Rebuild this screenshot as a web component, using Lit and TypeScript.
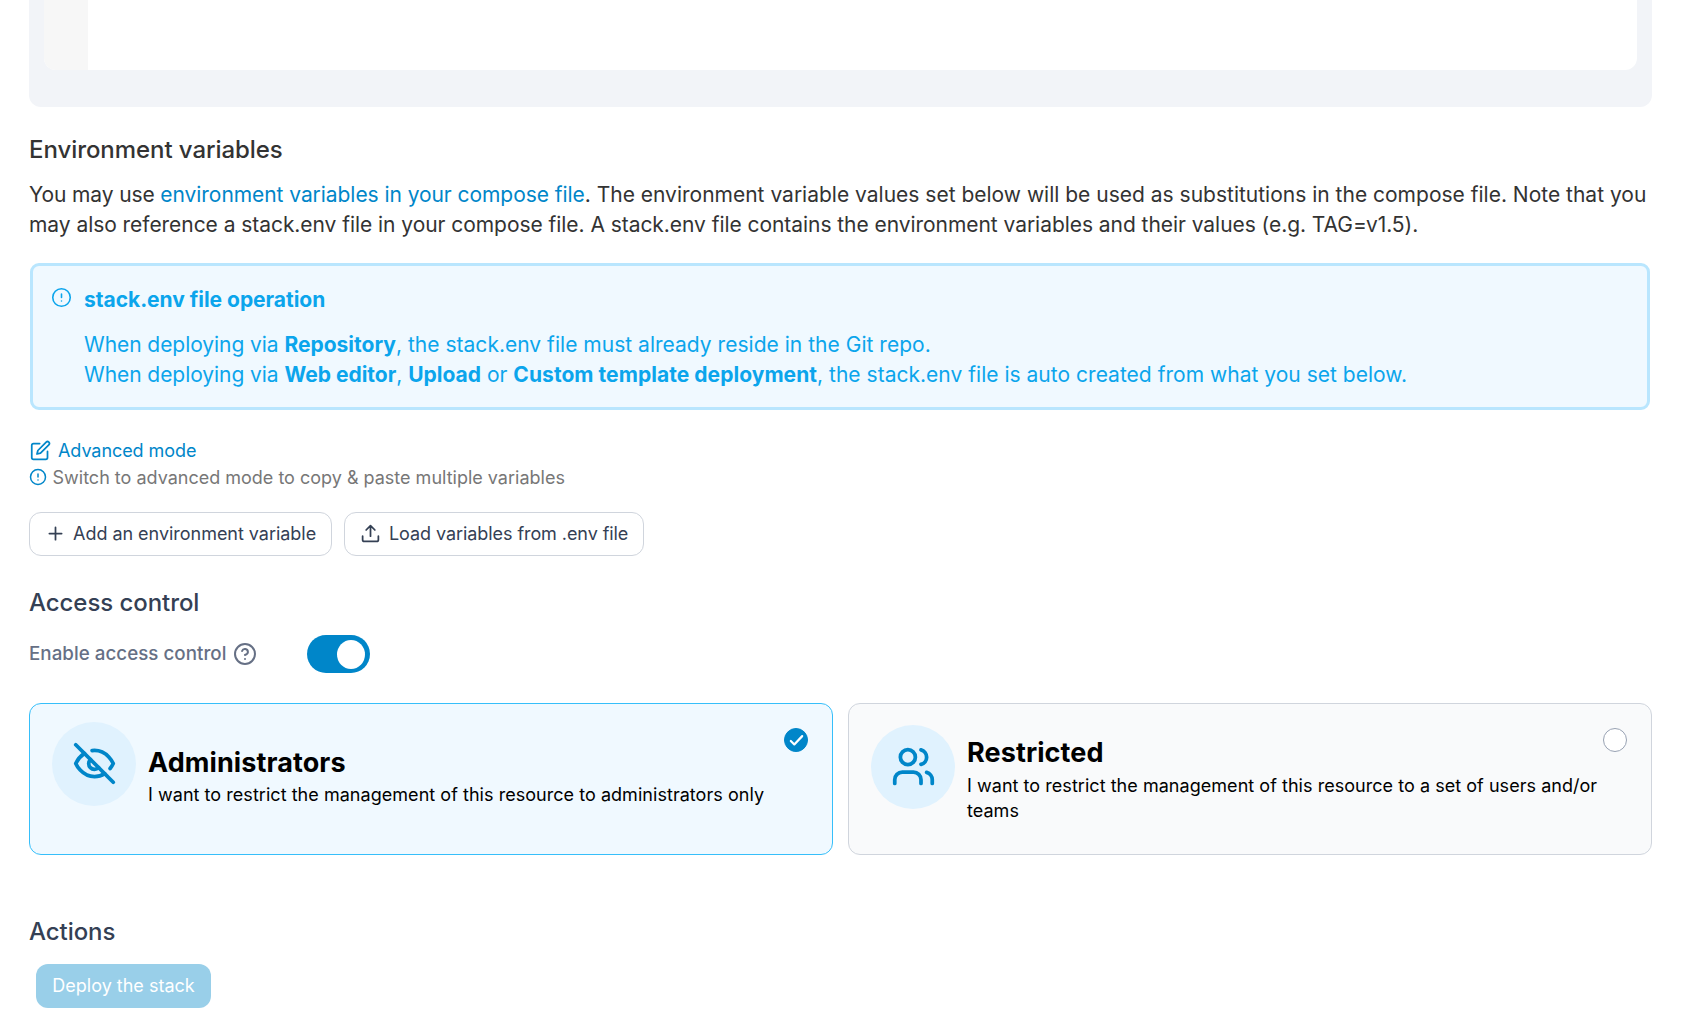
import { LitElement, html, svg, css } from "lit";
import { customElement, property } from "lit/decorators.js";

const ICONS: Record<string, unknown> = {
  alert: svg`<circle cx="12" cy="12" r="10"/><path d="M12 8v4M12 16h.01"/>`,
  edit: svg`<path d="M11 4H4a2 2 0 0 0-2 2v14a2 2 0 0 0 2 2h14a2 2 0 0 0 2-2v-7"/><path d="M18.5 2.5a2.12 2.12 0 0 1 3 3L12 15l-4 1 1-4Z"/>`,
  plus: svg`<path d="M12 5v14M5 12h14"/>`,
  upload: svg`<path d="M21 15v4a2 2 0 0 1-2 2H5a2 2 0 0 1-2-2v-4"/><path d="m17 8-5-5-5 5M12 3v12"/>`,
  help: svg`<circle cx="12" cy="12" r="10"/><path d="M9.09 9a3 3 0 0 1 5.83 1c0 2-3 3-3 3M12 17h.01"/>`,
  eyeOff: svg`<path d="M9.88 9.88a3 3 0 1 0 4.24 4.24"/><path d="M10.73 5.08A10.43 10.43 0 0 1 12 5c7 0 10 7 10 7a13.16 13.16 0 0 1-1.67 2.68"/><path d="M6.61 6.61A13.526 13.526 0 0 0 2 12s3 7 10 7a9.74 9.74 0 0 0 5.39-1.61"/><path d="m2 2 20 20"/>`,
  users: svg`<path d="M16 21v-2a4 4 0 0 0-4-4H6a4 4 0 0 0-4 4v2"/><circle cx="9" cy="7" r="4"/><path d="M22 21v-2a4 4 0 0 0-3-3.87M16 3.13a4 4 0 0 1 0 7.75"/>`,
  check: svg`<path d="m5.5 12.5 4 4 9-9.500"/>`,
};

@customElement("ui-icon")
class UiIcon extends LitElement {
  @property() name = "";
  static styles = css`
    :host { display: block; flex: none; width: 21px; height: 21px; }
    svg { display: block; width: 100%; height: 100%; fill: none; stroke: currentColor;
      stroke-width: var(--stroke, 2); stroke-linecap: round; stroke-linejoin: round; }
  `;
  render() {
    return html`<svg viewBox="0 0 24 24">${ICONS[this.name]}</svg>`;
  }
}

@customElement("app-root")
class AppRoot extends LitElement {
  static styles = css`
    :host { display: block; font-family: Inter, sans-serif; background: #fff; color: #333; }
    * { box-sizing: border-box; }
    p, h2, h3 { margin: 0; font-weight: 400; }
    .page { height: 1026px; padding: 0 29px; overflow: hidden; }
    .editor { height: 107px; padding: 0 15px 37px; background: #f2f4f8; border-radius: 0 0 12px 12px; }
    .code { height: 70px; display: flex; background: #fff; border-radius: 0 0 12px 12px; overflow: hidden; }
    .gutter { width: 44px; background: #f7f7f7; }
    .heading { font-size: 24px; line-height: 30px; font-weight: 500; color: #344054; letter-spacing: -0.06px; }
    .heading.env { margin-top: 28px; color: #333; }
    .intro { margin-top: 15px; font-size: 21px; line-height: 30px; white-space: nowrap; }
    .lead { letter-spacing: -0.12px; }
    .tight { letter-spacing: -0.06px; }
    .second { letter-spacing: -0.05px; }
    .loose { letter-spacing: 0.05px; }
    .tail { letter-spacing: 0.02px; }
    .link { color: #0086c9; }
    .alert { display: flex; gap: 12px; margin: 23px 2px 0 1px; height: 147px; padding: 21px 18px;
      border: 3px solid #b9e6fe; border-radius: 9px; background: #f0f9ff; color: #0ba5ec;
      font-size: 21px; line-height: 30px; white-space: nowrap; }
    .alert ui-icon { --stroke: 1.8; }
    .alert b { font-weight: 700; }
    .alert-title { margin: -2px 0 15px; font-size: 21px; font-weight: 700; letter-spacing: -0.03px; }
    .mode { display: flex; align-items: center; gap: 7px; height: 27px; margin: 27px 0 0 1px; font-size: 18px; line-height: 27px; letter-spacing: -0.07px; }
    .hint { display: flex; align-items: center; gap: 5.5px; height: 27px; font-size: 18px; line-height: 27px; color: #777; }
    .hint ui-icon { width: 18px; height: 18px; margin-bottom: 1px; color: #0086c9; }
    .buttons { display: flex; gap: 12px; margin-top: 21px; }
    .btn { display: flex; align-items: center; height: 44px; border: 1px solid #d0d5dd; border-radius: 12px;
      padding: 0 15px; gap: 7px; font: 400 18px/26px Inter, sans-serif; color: #344054; background: #fff; white-space: nowrap; }
    .btn ui-icon { margin-bottom: 1px; }
    .add { width: 303px; letter-spacing: -0.03px; }
    .load { width: 300px; gap: 8px; letter-spacing: -0.07px; }
    .access { margin-top: 32px; }
    .toggle-row { display: flex; align-items: center; height: 38px; margin-top: 17px; }
    .label { font-size: 18.75px; line-height: 28px; font-weight: 500; color: #667085; width: 204px; letter-spacing: 0.03px; white-space: nowrap; }
    .help { width: 24px; height: 24px; color: #667085; }
    .switch { display: flex; justify-content: flex-end; align-items: center; margin-left: 50px; width: 63px; height: 38px;
      padding: 0 5px; border-radius: 19px; background: #0086c9; }
    .knob { width: 28px; height: 29px; border-radius: 50%; background: #fff; }
    .cards { display: grid; grid-template-columns: 804px 804px; gap: 15px; margin-top: 30px; }
    .card { display: flex; position: relative; height: 152px; border: 1px solid #d0d5dd; border-radius: 12px; background: #f9fafb; color: #000; padding: 18px 22px; }
    .card.on { border-color: #36bffa; background: #f0f9ff; }
    .bubble { flex: none; display: grid; place-items: center; width: 84px; height: 84px; border-radius: 50%; background: #e0f2fe; color: #0086c9; }
    .bubble ui-icon { width: 45px; height: 45px; margin-bottom: 1px; }
    .card-text { margin: 24px 0 0 12px; }
    .card:not(.on) .bubble { margin-top: 3px; }
    .card:not(.on) .card-text { margin-top: 14px; }
    .card-title { font-size: 27px; line-height: 34px; font-weight: 700; letter-spacing: 0.1px; }
    .card-desc { margin-top: 3px; font-size: 18px; line-height: 25px; width: 640px; letter-spacing: 0.04px; }
    .on .card-desc { margin-top: 2px; }
    .radio { position: absolute; top: 24px; right: 24px; display: grid; place-items: center; width: 24px; height: 24px;
      border: 1px solid #98a2b3; border-radius: 50%; background: #fff; color: #fff; }
    .on .radio { border-color: #0086c9; background: #0086c9; }
    .radio ui-icon { --stroke: 2.5; }
    .actions { margin-top: 62px; }
    .deploy { justify-content: center; width: 175px; margin: 17px 0 0 7px; border: 0; background: #99cfe9; color: #fff; }
  `;

  private card(icon: string, title: string, text: string, on: boolean) {
    return html`<div class="card ${on ? "on" : ""}">
      <div class="bubble"><ui-icon name=${icon}></ui-icon></div>
      <div class="card-text">
        <h3 class="card-title">${title}</h3>
        <p class="card-desc">${text}</p>
      </div>
      <span class="radio">${on ? html`<ui-icon name="check"></ui-icon>` : ""}</span>
    </div>`;
  }

  render() {
    return html`<main class="page">
      <div class="editor"><div class="code"><div class="gutter"></div></div></div>
      <h2 class="heading env">Environment variables</h2>
      <p class="intro"><span class="lead">You may use </span><a class="link tight">environment variables in your compose file</a>. The environment variable values set below will be used as substitutions in the compose file. Note that you<br><span class="second">may also reference a stack.env file in your compose file. A stack.env file contains the environment variables and their values (e.g. TAG=v1.5).</span></p>
      <div class="alert">
        <ui-icon name="alert"></ui-icon>
        <div>
          <h3 class="alert-title">stack.env file operation</h3>
          <p><span class="tight">When deploying via </span><b>Repository</b><span class="tail">, the stack.env file must already reside in the Git repo.</span></p>
          <p><span class="tight">When deploying via </span><b>Web editor</b>, <b>Upload</b> or <b class="loose">Custom template deployment</b><span class="tail">, the stack.env file is auto created from what you set below.</span></p>
        </div>
      </div>
      <a class="mode link"><ui-icon name="edit"></ui-icon>Advanced mode</a>
      <div class="hint"><ui-icon name="alert"></ui-icon>Switch to advanced mode to copy &amp; paste multiple variables</div>
      <div class="buttons">
        <button class="btn add"><ui-icon name="plus"></ui-icon>Add an environment variable</button>
        <button class="btn load"><ui-icon name="upload"></ui-icon>Load variables from .env file</button>
      </div>
      <h2 class="heading access">Access control</h2>
      <div class="toggle-row">
        <span class="label">Enable access control</span>
        <ui-icon class="help" name="help"></ui-icon>
        <span class="switch"><span class="knob"></span></span>
      </div>
      <div class="cards">
        ${this.card("eyeOff", "Administrators", "I want to restrict the management of this resource to administrators only", true)}
        ${this.card("users", "Restricted", "I want to restrict the management of this resource to a set of users and/or teams", false)}
      </div>
      <h2 class="heading actions">Actions</h2>
      <button class="btn deploy">Deploy the stack</button>
    </main>`;
  }
}
